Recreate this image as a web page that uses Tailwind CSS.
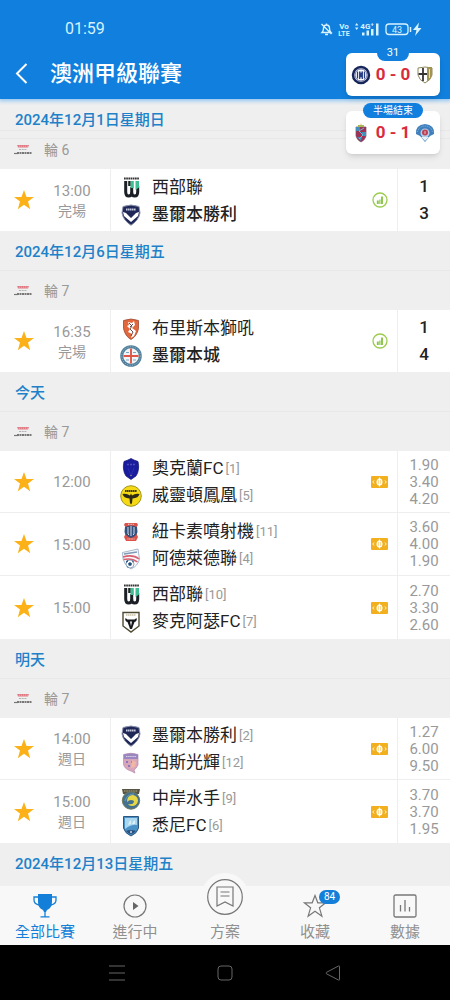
<!DOCTYPE html>
<html lang="zh-Hant">

<head>
    <meta charset="UTF-8">
    <meta name="viewport" content="width=device-width, initial-scale=1.0">
    <title>澳洲甲級聯賽</title>
    <script src="https://cdn.jsdelivr.net/npm/@tailwindcss/browser@4"></script>
</head>

<body class="h-screen flex flex-col bg-white font-['Roboto','Noto_Sans_CJK_TC',sans-serif] text-[#222]">

    <!-- shared icons and club crests -->
    <svg class="hidden">
        <symbol id="star" viewBox="0 0 20 20"><path fill="#fbb117" d="M10 0l2.500 7H20l-6 4.600 2.200 7.600L10 14.800l-6.200 4.400L6 11.600 0 7h7.500z" /></symbol>
        <symbol id="league" viewBox="0 0 18 12">
            <path fill="#e07c86" d="M3 1h12l-1 2.500H4z" />
            <path stroke="#f5dfe1" stroke-width=".5" stroke-dasharray="1 1" d="M3 2.200h12" />
            <path stroke="#aaa" stroke-width=".9" stroke-dasharray="2 .7" d="M5 5.500h8" />
            <path stroke="#777" stroke-width="2.200" stroke-dasharray="2 .5" d="M3 9h15" />
            <path stroke="#777" stroke-width="1.200" d="M0 9.500h4" />
        </symbol>
        <symbol id="chart" viewBox="0 0 16 16">
            <circle cx="8" cy="8" r="7" fill="none" stroke="#9ccc4e" stroke-width="1.300" />
            <path stroke="#8bc34a" stroke-width="1.900" d="M5.800 8.500V12M10 4.500V12" />
            <path stroke="#8bc34a" stroke-width="1.200" d="M7.900 7.500V12" />
        </symbol>
        <symbol id="note" viewBox="0 0 17 12">
            <rect width="17" height="12" rx="1" fill="#f2b01e" />
            <ellipse cx="8.500" cy="6" rx="2.400" ry="3" fill="#f9d88a" stroke="#fff" stroke-width="1.200" />
            <path stroke="#fff" stroke-width="1.200" d="M8.500 1.500v9" />
            <path fill="none" stroke="#fff" stroke-width=".9" d="M3 4.500L1.800 6 3 7.500M14 4.500L15.200 6 14 7.500" />
        </symbol>
        <symbol id="western" viewBox="0 0 22 22">
            <path stroke="#333" stroke-width="2" stroke-dasharray="1.700 .5" d="M4 1.500h15" />
            <path fill="none" stroke="#1c2026" stroke-width="3" d="M5.700 4v11q0 4 3 4t3-4V10M11.700 15q0 4 3 4t3-4V9" />
            <path stroke="#222" stroke-width="2.600" d="M9.500 4v5" />
            <path fill="#3fbd94" d="M10.500 4h3.300v7h-3.300zM15.500 4H19v6.500l-3.500 2.500z" />
        </symbol>
        <symbol id="victory" viewBox="0 0 22 22">
            <path fill="#1f2857" stroke="#8d94b0" d="M3 2.500Q11-.5 19 2.500L20 9q-1 7-9 12.300Q3 16 2 9z" />
            <path fill="#fff" d="M3 8l3 1 5 5 5-5 3-1-1 4-7 6-7-6z" />
            <path stroke="#c5cade" stroke-width="2" stroke-dasharray="1.500 .4" d="M6 5.500h10" />
        </symbol>
        <symbol id="roar" viewBox="0 0 22 22">
            <path fill="#e2673d" stroke="#9b4a35" stroke-width=".8" d="M3.500 2.500Q11-.5 18.500 2.500v8Q17 18 11 21.500 5 18 3.500 10.500z" />
            <path fill="#fff" d="M8 4l4 1 2-2 1 4-3 3 4 3-2 5-3 2 1-4-4-2 2-3-3-3 2-1z" />
            <path fill="none" stroke="#5a3535" stroke-width=".9" d="M9 5l3 3-2 3 3 3-2 4M13 6l-3 3" />
        </symbol>
        <symbol id="city" viewBox="0 0 22 22">
            <circle cx="11" cy="11" r="9.300" fill="#f2f5f7" stroke="#52809c" stroke-width="3" />
            <circle cx="11" cy="11" r="9.300" fill="none" stroke="#9dbdce" stroke-dasharray="1 1.500" />
            <path stroke="#df5547" stroke-width="1.900" d="M11 3.500v15M3.500 11h15" />
            <path stroke="#72a8c5" d="M6 7.500h3M13 7.500h3M6 15h3M13 15h3" />
        </symbol>
        <symbol id="auckland" viewBox="0 0 22 22">
            <path fill="#1a1c9e" stroke="#101270" stroke-width=".7" d="M8 2l3-1.500L14 2l4 1.500Q20 12 16 18l-5 3.500L6 18Q2 12 4 3.500z" />
            <path stroke="#4a50b8" stroke-width="1.500" stroke-dasharray="2 1" d="M7 6.500h8" />
            <path fill="none" stroke="#2a2fae" d="M8 10l3 8 3-8" />
            <path fill="#c7c06b" d="M10.500 17h1v1h-1z" />
        </symbol>
        <symbol id="phoenix" viewBox="0 0 22 22">
            <circle cx="11" cy="11" r="10.300" fill="#f4d914" stroke="#a3941c" />
            <path stroke="#3f3a14" stroke-width="2" stroke-dasharray="1.600 .4" d="M5 6h12" />
            <path fill="#2d2a18" d="M2.500 9q4-1 7.500 1.500l1-2 1 2Q15.500 8 19.500 9q-1 4-7 4.500L12 18l-1 1.500-1-1.500-.5-4.500q-6-.5-7-4.500z" />
        </symbol>
        <symbol id="jets" viewBox="0 0 22 22">
            <path fill="#d9534a" d="M5 2h12l1 2-2 3 1 7 1 2-2 4H6l-2-4 1-2 1-7-2-3z" />
            <path fill="#33507e" d="M5 6q6-3 12 0l.5 5q-1 4-6.500 6-5.500-2-6.500-6z" />
            <path fill="none" stroke="#d4dbe6" d="M8 6v7l1 1M11 5v10M14 6v7l-1 1" />
            <path stroke="#f2d5d0" stroke-dasharray="1 .6" d="M8 3.300h6M7.500 18h7" />
        </symbol>
        <symbol id="adelaide" viewBox="0 0 22 22">
            <path fill="#f7f9fb" stroke="#91a7bf" stroke-width=".8" d="M2.500 4.500L18 1l1.500 10Q18 18 11 21 4 17 3 11z" />
            <path stroke="#7e9ab8" stroke-width="1.600" d="M4 6l13-2" />
            <path fill="none" stroke="#d96071" stroke-width="1.500" d="M3 9q10-3 16 2M3.500 11.500q8-2 14 2.500" />
            <circle cx="10" cy="16" r="4" fill="#fff" stroke="#7696b4" stroke-width=".8" />
            <path fill="#244c7c" d="M10 14l2 1.500-.8 2.300H8.800L8 15.500zM6 13l2-1v1.500L6.500 15zM12 12l2 2-1.500.5zM7 18l1.500 1L8 20z" />
        </symbol>
        <symbol id="macarthur" viewBox="0 0 22 22">
            <path fill="#fff" stroke="#4e4931" stroke-width="1.400" d="M3 1.500h16V15L11 21 3 15z" />
            <path stroke="#aaa27a" stroke-width="1.200" stroke-dasharray="1.500 .5" d="M6 4h10" />
            <path fill="#17191d" d="M5.500 7l2 1.500h7l2-1.500q1 3-2 4L13 15l-1 3h-2l-1-3-1.500-4Q4.500 10 5.500 7z" />
            <path fill="#fff" d="M10 10.500h2L11 15z" />
        </symbol>
        <symbol id="glory" viewBox="0 0 22 22">
            <path fill="#d8a5bb" stroke="#b58aae" stroke-width=".7" d="M3.500 2.500Q11 0 18 2.500V13q-2 4-4 5l1 3-4-2Q4 17 3.500 12z" />
            <path fill="#9a87c0" d="M4 2.500q7-2 14 0V7H4z" />
            <path stroke="#dcd0ea" stroke-dasharray="1.500 .6" d="M6 4.500h10" />
            <path fill="#8978ba" d="M6 9h2v2H6zM11 9h1.500v2H11zM8 13h2v2H8z" />
            <path fill="#f0b7a5" d="M12 8l4 2-1 5-4 1z" />
        </symbol>
        <symbol id="mariners" viewBox="0 0 22 22">
            <path fill="#555447" d="M2 1h18l-1 5H3z" />
            <path stroke="#b5ac77" stroke-width="1.200" stroke-dasharray="1.500 .8" d="M4 3h14" />
            <circle cx="11" cy="12.500" r="8.700" fill="#44718f" stroke="#737b5b" />
            <path fill="#e5d746" d="M7 14q0-7 6-7 5 1 5 6-1 5-6 5-3 0-4-2 5 1 6-2 0-2-3-2-2 0-4 2z" />
            <path fill="none" stroke="#68a0b5" d="M5 13q2-7 9-7" />
        </symbol>
        <symbol id="sydney" viewBox="0 0 22 22">
            <path fill="#4a91c8" stroke="#2d567f" d="M3.500 1.500h15V13q-1 5-7.500 8-6.500-3-7.500-8z" />
            <path fill="#a9d7ef" d="M5 3h12v7q-5-1-12 4z" />
            <path fill="#d9effa" d="M8 10q1-4 3-5v4zM12 9q1-3 3-4v4z" />
            <path fill="#27517f" d="M6 16q5-2 10 0-2 2-5 3.500Q8 18 6 16z" />
            <path fill="#dfedf7" d="M11 15.500l1 1.500-1 1.500-1-1.500z" />
        </symbol>
    </svg>

    <header class="h-[99px] shrink-0 relative z-20 bg-[#107fdd] text-white shadow-[0_1px_4px_1px_#8fc5f2]">
        <!-- status bar -->
        <div class="h-[49px] pt-2 pl-[65px] pr-[28px] flex items-center justify-between text-[#d7f3ff]">
            <span class="text-base">01:59</span>
            <svg class="w-[102px] h-4" viewBox="0 0 102 16" fill="none" stroke="currentColor">
                <path stroke-width="1.400" d="M2 11.500q1.500-1.500 1.500-4Q3.500 4 6.500 4t3 3.500q0 2.500 1.500 4zM5 13.500h3M6.500 4V2.500M1.500 3l10 10" />
                <g fill="currentColor" stroke="none" font-family="Roboto" font-weight="700" text-anchor="middle">
                    <text x="24" y="7.500" font-size="8">Vo</text>
                    <text x="24" y="14.500" font-size="7">LTE</text>
                    <text x="47" y="7.500" font-size="8">4G⁺</text>
                    <text x="77" y="11.500" font-size="9" font-weight="400">43</text>
                    <path d="M35 4.500L36.700 2l1.700 2.500zM35 6.500L36.700 9l1.700-2.500z" />
                    <path d="M42 11.500h2.500v3H42zM46.500 9.500H49v5h-2.500zM51 8h2.500v6.500H51zM56 2.500h2.500v12H56zM99 1.500L93 9h3.500L95 15l6.500-8H98z" />
                </g>
                <rect x="66" y="3" width="22" height="10.500" rx="3" stroke-width="1.300" />
                <path stroke-width="1.500" d="M90.500 6v5" />
            </svg>
        </div>
        <div class="h-12 pl-3 flex items-center">
            <button class="w-6 h-6 mr-[14px]" aria-label="返回">
                <svg class="w-5 h-6" viewBox="0 0 20 24" fill="none" stroke="currentColor" stroke-width="2"><path d="M14.500 3L5 12.500 14.500 22" /></svg>
            </button>
            <h1 class="text-[22px] font-medium">澳洲甲級聯賽</h1>
        </div>

        <!-- live scores floating over the list -->
        <a href="#" class="absolute right-[10px] top-[53px] w-[94px] h-[43px] bg-white rounded-md shadow-md flex items-center justify-between px-[5px]">
            <span class="absolute left-1/2 -translate-x-1/2 -top-[7px] w-8 h-[15px] rounded-b-lg bg-[#107fdd] text-[11px] leading-[14px] text-center">31</span>
            <svg class="w-5 h-5" viewBox="0 0 20 20">
                <circle cx="10" cy="10" r="8" fill="#f6f7fa" stroke="#16265b" stroke-width="2.500" />
                <circle cx="10" cy="10" r="6" fill="#fff" stroke="#4a5690" stroke-width=".8" />
                <path fill="none" stroke="#263c84" stroke-width="1.300" d="M6.500 6.500v7M8.700 14V6.500L10 11l1.300-4.500V14M13.500 6.500v7" />
            </svg>
            <span class="text-[17px] font-bold text-[#d92b3c]">0 - 0</span>
            <svg class="w-5 h-5" viewBox="0 0 20 20">
                <path fill="#fff" stroke="#8f8760" d="M3 3q7-2 14 0v7q-1 5-7 8-6-3-7-8z" />
                <path fill="#a29350" d="M12 2h5v8q-1 4-5 6.500z" />
                <path stroke="#333" stroke-width="1.800" d="M8 3v13M3.500 9H12" />
                <path stroke="#eadf9c" d="M14.500 4v9" />
            </svg>
        </a>
        <a href="#" class="absolute right-[10px] top-[111px] w-[94px] h-[43px] bg-white rounded-md shadow-md flex items-center justify-between px-[5px]">
            <span class="absolute left-1/2 -translate-x-1/2 -top-2 w-[60px] h-[15px] rounded-full bg-[#107fdd] text-[10px] leading-4 text-center">半場結束</span>
            <svg class="w-5 h-5" viewBox="0 0 20 20">
                <path fill="#eac265" d="M10 0l1 3H9z" />
                <path fill="#9e3154" stroke="#7a5268" stroke-width=".7" d="M5 4h10v9q-1 4-5 6-4-2-5-6z" />
                <path fill="#438fb9" d="M5 4h4v4H5zM11 9h4v4h-4zM6 14h5l-1 4z" />
                <path fill="none" stroke="#5fbdd8" d="M13 5l-5 3 4 4-4 4" />
                <path fill="#a8b75c" d="M7 2h6v2H7z" />
            </svg>
            <span class="text-[17px] font-bold text-[#d92b3c]">0 - 1</span>
            <svg class="w-5 h-5" viewBox="0 0 20 20">
                <path fill="#3f7fbc" d="M1 11Q0 2 10 1q10 1 9 10l-4 2-5 6-5-6z" />
                <path fill="none" stroke="#8fb8dd" stroke-dasharray="1 1" d="M2.500 9Q4 3 10 3t7.500 6" />
                <circle cx="10" cy="10" r="4.500" fill="#b5cde8" />
                <circle cx="10" cy="9.500" r="3" fill="#be4055" />
                <path fill="#e7f0f8" d="M6 14h8l-4 4z" />
                <path stroke="#e6b8c4" d="M10 8v3" />
            </svg>
        </a>
    </header>

    <main class="flex-1 min-h-0 overflow-hidden bg-[#efefef]">
        <section>
            <h2 class="h-10 pt-[3px] px-[15px] flex items-center text-[15px] font-medium text-[#2081c9] border-b border-[#e8e8e8]">2024年12月1日星期日</h2>
            <!-- round bar is partly scrolled under the date -->
            <div class="h-[39px] -mt-[9px] px-[14px] flex items-center gap-3 text-sm text-[#999] border-t border-[#e8e8e8]">
                <svg class="w-[18px] h-3"><use href="#league" /></svg>輪 6
            </div>
            <ul class="bg-white divide-y divide-[#eee]">
                <li class="h-[62px] flex">
                    <button class="w-12 flex items-center justify-center" aria-label="收藏"><svg class="w-5 h-5"><use href="#star" /></svg></button>
                    <div class="w-[63px] pt-px pr-[14px] flex flex-col justify-center items-center border-r border-[#eee] text-[#999]">
                        <time class="text-[15px] leading-5">13:00</time><span class="text-sm leading-5">完場</span>
                    </div>
                    <div class="flex-1 pt-[2px] pl-[9px] flex flex-col justify-center text-[17px]">
                        <p class="h-[27px] flex items-center gap-[10px]"><svg class="w-[22px] h-[22px]"><use href="#western" /></svg>西部聯</p>
                        <p class="h-[27px] flex items-center gap-[10px] font-medium"><svg class="w-[22px] h-[22px]"><use href="#victory" /></svg>墨爾本勝利</p>
                    </div>
                    <svg class="w-4 h-4 mr-[9px] self-center"><use href="#chart" /></svg>
                    <div class="w-[53px] border-l border-[#eee] flex flex-col justify-center text-center text-[17px] leading-[27px] font-medium"><span>1</span><span>3</span></div>
                </li>
            </ul>
        </section>

        <section>
            <h2 class="h-10 pt-[3px] px-[15px] flex items-center text-[15px] font-medium text-[#2081c9] border-b border-[#e8e8e8]">2024年12月6日星期五</h2>
            <div class="h-[39px] px-[14px] flex items-center gap-3 text-sm text-[#999]">
                <svg class="w-[18px] h-3"><use href="#league" /></svg>輪 7
            </div>
            <ul class="bg-white divide-y divide-[#eee]">
                <li class="h-[62px] flex">
                    <button class="w-12 flex items-center justify-center" aria-label="收藏"><svg class="w-5 h-5"><use href="#star" /></svg></button>
                    <div class="w-[63px] pt-px pr-[14px] flex flex-col justify-center items-center border-r border-[#eee] text-[#999]">
                        <time class="text-[15px] leading-5">16:35</time><span class="text-sm leading-5">完場</span>
                    </div>
                    <div class="flex-1 pt-[2px] pl-[9px] flex flex-col justify-center text-[17px]">
                        <p class="h-[27px] flex items-center gap-[10px]"><svg class="w-[22px] h-[22px]"><use href="#roar" /></svg>布里斯本獅吼</p>
                        <p class="h-[27px] flex items-center gap-[10px] font-medium"><svg class="w-[22px] h-[22px]"><use href="#city" /></svg>墨爾本城</p>
                    </div>
                    <svg class="w-4 h-4 mr-[9px] self-center"><use href="#chart" /></svg>
                    <div class="w-[53px] border-l border-[#eee] flex flex-col justify-center text-center text-[17px] leading-[27px] font-medium"><span>1</span><span>4</span></div>
                </li>
            </ul>
        </section>

        <section>
            <h2 class="h-10 pt-[3px] px-[15px] flex items-center text-[15px] font-medium text-[#2081c9] border-b border-[#e8e8e8]">今天</h2>
            <div class="h-[39px] px-[14px] flex items-center gap-3 text-sm text-[#999]">
                <svg class="w-[18px] h-3"><use href="#league" /></svg>輪 7
            </div>
            <ul class="bg-white divide-y divide-[#eee]">
                <li class="h-[62px] flex">
                    <button class="w-12 flex items-center justify-center" aria-label="收藏"><svg class="w-5 h-5"><use href="#star" /></svg></button>
                    <div class="w-[63px] pt-px pr-[14px] flex flex-col justify-center items-center border-r border-[#eee] text-[#999]">
                        <time class="text-[15px] leading-5">12:00</time>
                    </div>
                    <div class="flex-1 pt-[2px] pl-[9px] flex flex-col justify-center text-[17px]">
                        <p class="h-[27px] flex items-center"><svg class="w-[22px] h-[22px] mr-[10px]"><use href="#auckland" /></svg>奧克蘭FC<span class="ml-[2px] text-[13px] text-[#999]">[1]</span></p>
                        <p class="h-[27px] flex items-center"><svg class="w-[22px] h-[22px] mr-[10px]"><use href="#phoenix" /></svg>威靈頓鳳凰<span class="ml-[2px] text-[13px] text-[#999]">[5]</span></p>
                    </div>
                    <svg class="w-[17px] h-3 mr-[9px] self-center"><use href="#note" /></svg>
                    <div class="w-[53px] pt-px border-l border-[#eee] flex flex-col justify-center text-center text-[15px] leading-[17px] text-[#999]"><span>1.90</span><span>3.40</span><span>4.20</span></div>
                </li>
                <li class="h-[63px] flex">
                    <button class="w-12 flex items-center justify-center" aria-label="收藏"><svg class="w-5 h-5"><use href="#star" /></svg></button>
                    <div class="w-[63px] pt-px pr-[14px] flex flex-col justify-center items-center border-r border-[#eee] text-[#999]">
                        <time class="text-[15px] leading-5">15:00</time>
                    </div>
                    <div class="flex-1 pt-[2px] pl-[9px] flex flex-col justify-center text-[17px]">
                        <p class="h-[27px] flex items-center"><svg class="w-[22px] h-[22px] mr-[10px]"><use href="#jets" /></svg>紐卡素噴射機<span class="ml-[2px] text-[13px] text-[#999]">[11]</span></p>
                        <p class="h-[27px] flex items-center"><svg class="w-[22px] h-[22px] mr-[10px]"><use href="#adelaide" /></svg>阿德萊德聯<span class="ml-[2px] text-[13px] text-[#999]">[4]</span></p>
                    </div>
                    <svg class="w-[17px] h-3 mr-[9px] self-center"><use href="#note" /></svg>
                    <div class="w-[53px] pt-px border-l border-[#eee] flex flex-col justify-center text-center text-[15px] leading-[17px] text-[#999]"><span>3.60</span><span>4.00</span><span>1.90</span></div>
                </li>
                <li class="h-[63px] flex">
                    <button class="w-12 flex items-center justify-center" aria-label="收藏"><svg class="w-5 h-5"><use href="#star" /></svg></button>
                    <div class="w-[63px] pt-px pr-[14px] flex flex-col justify-center items-center border-r border-[#eee] text-[#999]">
                        <time class="text-[15px] leading-5">15:00</time>
                    </div>
                    <div class="flex-1 pt-[2px] pl-[9px] flex flex-col justify-center text-[17px]">
                        <p class="h-[27px] flex items-center"><svg class="w-[22px] h-[22px] mr-[10px]"><use href="#western" /></svg>西部聯<span class="ml-[2px] text-[13px] text-[#999]">[10]</span></p>
                        <p class="h-[27px] flex items-center"><svg class="w-[22px] h-[22px] mr-[10px]"><use href="#macarthur" /></svg>麥克阿瑟FC<span class="ml-[2px] text-[13px] text-[#999]">[7]</span></p>
                    </div>
                    <svg class="w-[17px] h-3 mr-[9px] self-center"><use href="#note" /></svg>
                    <div class="w-[53px] pt-px border-l border-[#eee] flex flex-col justify-center text-center text-[15px] leading-[17px] text-[#999]"><span>2.70</span><span>3.30</span><span>2.60</span></div>
                </li>
            </ul>
        </section>

        <section>
            <h2 class="h-10 pt-[3px] px-[15px] flex items-center text-[15px] font-medium text-[#2081c9] border-b border-[#e8e8e8]">明天</h2>
            <div class="h-[39px] px-[14px] flex items-center gap-3 text-sm text-[#999]">
                <svg class="w-[18px] h-3"><use href="#league" /></svg>輪 7
            </div>
            <ul class="bg-white divide-y divide-[#eee]">
                <li class="h-[62px] flex">
                    <button class="w-12 flex items-center justify-center" aria-label="收藏"><svg class="w-5 h-5"><use href="#star" /></svg></button>
                    <div class="w-[63px] pt-px pr-[14px] flex flex-col justify-center items-center border-r border-[#eee] text-[#999]">
                        <time class="text-[15px] leading-5">14:00</time><span class="text-sm leading-5">週日</span>
                    </div>
                    <div class="flex-1 pt-[2px] pl-[9px] flex flex-col justify-center text-[17px]">
                        <p class="h-[27px] flex items-center"><svg class="w-[22px] h-[22px] mr-[10px]"><use href="#victory" /></svg>墨爾本勝利<span class="ml-[2px] text-[13px] text-[#999]">[2]</span></p>
                        <p class="h-[27px] flex items-center"><svg class="w-[22px] h-[22px] mr-[10px]"><use href="#glory" /></svg>珀斯光輝<span class="ml-[2px] text-[13px] text-[#999]">[12]</span></p>
                    </div>
                    <svg class="w-[17px] h-3 mr-[9px] self-center"><use href="#note" /></svg>
                    <div class="w-[53px] pt-px border-l border-[#eee] flex flex-col justify-center text-center text-[15px] leading-[17px] text-[#999]"><span>1.27</span><span>6.00</span><span>9.50</span></div>
                </li>
                <li class="h-[63px] flex">
                    <button class="w-12 flex items-center justify-center" aria-label="收藏"><svg class="w-5 h-5"><use href="#star" /></svg></button>
                    <div class="w-[63px] pt-px pr-[14px] flex flex-col justify-center items-center border-r border-[#eee] text-[#999]">
                        <time class="text-[15px] leading-5">15:00</time><span class="text-sm leading-5">週日</span>
                    </div>
                    <div class="flex-1 pt-[2px] pl-[9px] flex flex-col justify-center text-[17px]">
                        <p class="h-[27px] flex items-center"><svg class="w-[22px] h-[22px] mr-[10px]"><use href="#mariners" /></svg>中岸水手<span class="ml-[2px] text-[13px] text-[#999]">[9]</span></p>
                        <p class="h-[27px] flex items-center"><svg class="w-[22px] h-[22px] mr-[10px]"><use href="#sydney" /></svg>悉尼FC<span class="ml-[2px] text-[13px] text-[#999]">[6]</span></p>
                    </div>
                    <svg class="w-[17px] h-3 mr-[9px] self-center"><use href="#note" /></svg>
                    <div class="w-[53px] pt-px border-l border-[#eee] flex flex-col justify-center text-center text-[15px] leading-[17px] text-[#999]"><span>3.70</span><span>3.70</span><span>1.95</span></div>
                </li>
            </ul>
        </section>

        <section>
            <h2 class="h-10 pt-[3px] px-[15px] flex items-center text-[15px] font-medium text-[#2081c9]">2024年12月13日星期五</h2>
        </section>
    </main>

    <!-- tab bar -->
    <nav class="h-[59px] shrink-0 relative z-10 grid grid-cols-5 bg-[#f8f8f8] text-[15px] leading-5 text-[#909090]">
        <a href="#" class="flex flex-col items-center justify-end pb-[3px] gap-1 text-[#147fd8]">
            <svg class="w-6 h-6" viewBox="0 0 24 24">
                <path fill="currentColor" d="M5 0h14v8q0 6-5 8l-1 2h-2l-1-2Q5 14 5 8z" />
                <path fill="none" stroke="currentColor" stroke-width="1.300" d="M5 3H1v3q0 4 5 5M19 3h4v3q0 4-5 5M12 17v5.500M7.500 22.800h9" />
            </svg>
            全部比賽
        </a>
        <a href="#" class="flex flex-col items-center justify-end pb-[3px] gap-1">
            <svg class="w-6 h-6" viewBox="0 0 24 24">
                <circle cx="12" cy="12" r="11" fill="none" stroke="#777" stroke-width="1.200" />
                <path fill="#666" d="M10 8l5.500 4-5.500 4z" />
            </svg>
            進行中
        </a>
        <a href="#" class="relative flex flex-col items-center justify-end pb-[3px]">
            <span class="absolute -top-[13px] w-12 h-12 rounded-full bg-[#f8f8f8] flex items-center justify-center">
                <svg class="w-9 h-9" viewBox="0 0 36 36" fill="none" stroke="#777" stroke-width="1.200">
                    <circle cx="18" cy="18" r="17.300" />
                    <path d="M10 8h16v19l-8-4-8 4zM13.500 13h9M13.500 17h9" />
                </svg>
            </span>
            方案
        </a>
        <a href="#" class="relative flex flex-col items-center justify-end pb-[3px] gap-1">
            <svg class="w-6 h-6" viewBox="0 0 24 24" fill="none" stroke="#777" stroke-width="1.200"><path d="M12 1.500l2.800 7.300h8l-6.400 5 2.500 8.400-6.900-4.900-6.900 4.900 2.500-8.400-6.400-5h8z" /></svg>
            <span class="absolute top-1 left-1/2 ml-1 w-[21px] h-[14px] rounded-full bg-[#147fd8] text-white text-[10px] leading-[14px] text-center">84</span>
            收藏
        </a>
        <a href="#" class="flex flex-col items-center justify-end pb-[3px] gap-1">
            <svg class="w-6 h-6" viewBox="0 0 24 24" fill="none" stroke="#777" stroke-width="1.300">
                <rect x="1" y="1" width="22" height="22" rx="1.500" />
                <path d="M7.500 11v6.500M12 6v11.500M16.500 13v4.500" />
            </svg>
            數據
        </a>
    </nav>

    <!-- system buttons -->
    <div class="h-[55px] shrink-0 bg-black flex items-center justify-center gap-[92px] text-[#666]">
        <button aria-label="選單"><svg class="w-4 h-4" viewBox="0 0 16 16" fill="none" stroke="currentColor"><path d="M0 1h16M0 8h16M0 15h16" /></svg></button>
        <button aria-label="主畫面"><svg class="w-4 h-4" viewBox="0 0 16 16" fill="none" stroke="currentColor"><rect x="1" y="1" width="14" height="14" rx="3" /></svg></button>
        <button aria-label="上一頁"><svg class="w-4 h-4" viewBox="0 0 16 16" fill="none" stroke="currentColor"><path d="M14.500 1.500v13q0 1-1 .5L1.500 8.800q-1-.8 0-1.500L13.500 1q1-.5 1 .5z" /></svg></button>
    </div>
</body>

</html>
